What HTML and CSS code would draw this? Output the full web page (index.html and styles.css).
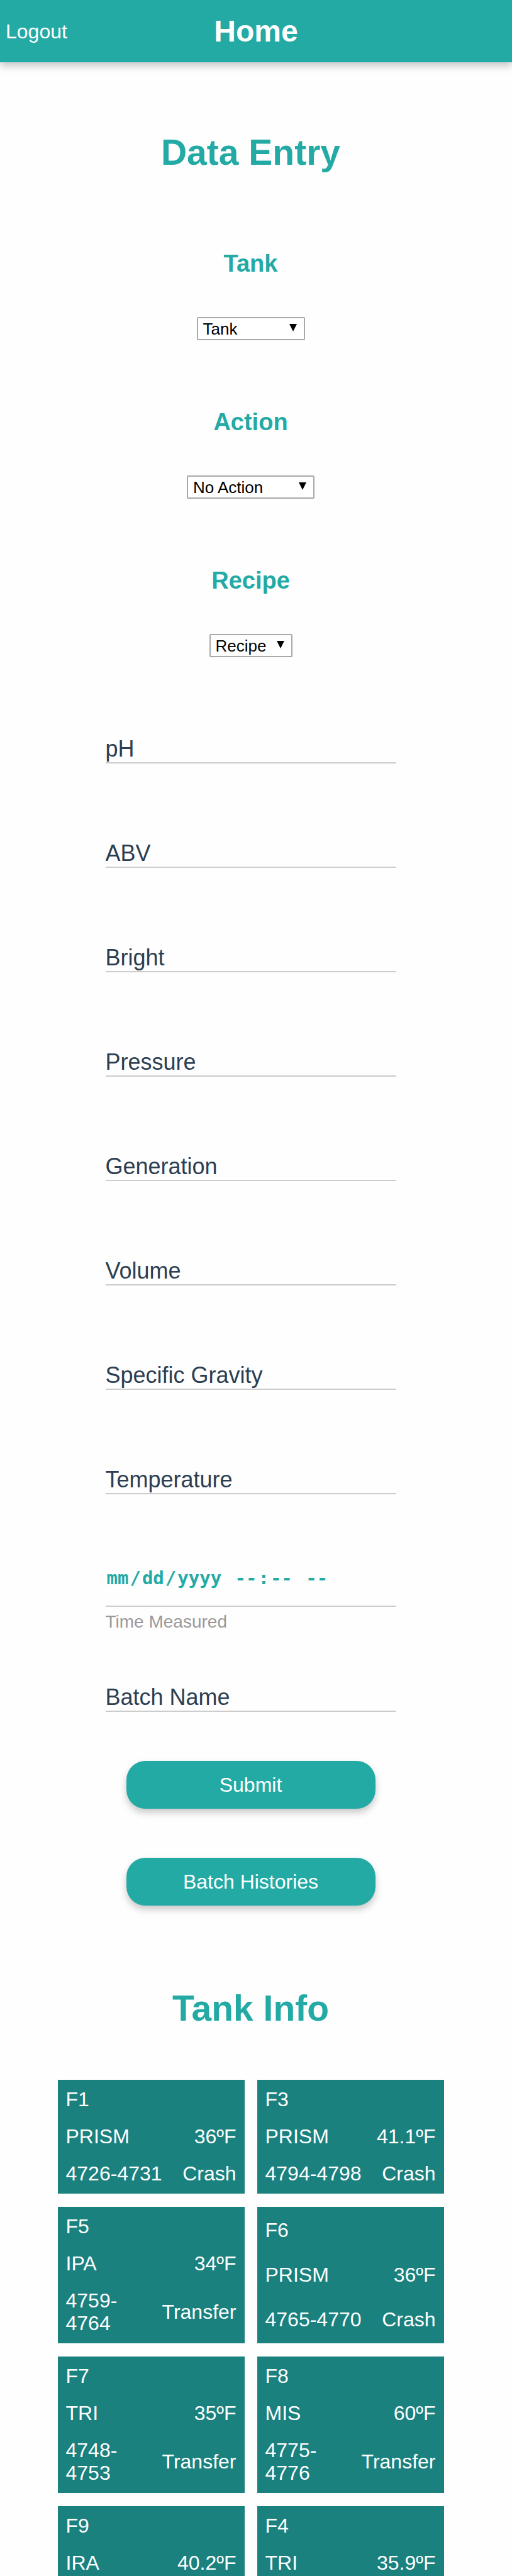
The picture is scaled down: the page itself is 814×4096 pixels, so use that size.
FILE: index.html
```html
<!DOCTYPE html>
<html lang="en">
<head>
<meta charset="utf-8">
<meta name="viewport" content="width=device-width, initial-scale=1">
<title>Home</title>
<link rel="stylesheet" href="styles.css">
</head>
<body>
<div class="app">
  <header class="topbar">
    <a class="logout" href="#logout">Logout</a>
    <h1 class="topbar-title">Home</h1>
  </header>
  <main class="page">
    <h2 class="section-title">Data Entry</h2>
    <form class="entry">
      <div class="choice">
        <label class="choice-label" for="tank">Tank</label>
        <div class="picker picker-tank">
          <select class="picker-select" id="tank"><option>Tank</option></select>
          <svg class="picker-arrow" viewBox="0 0 12 12" aria-hidden="true"><path d="M0 0H12L6 12Z"/></svg>
        </div>
      </div>
      <div class="choice">
        <label class="choice-label" for="action">Action</label>
        <div class="picker picker-action">
          <select class="picker-select" id="action"><option>No Action</option></select>
          <svg class="picker-arrow" viewBox="0 0 12 12" aria-hidden="true"><path d="M0 0H12L6 12Z"/></svg>
        </div>
      </div>
      <div class="choice">
        <label class="choice-label" for="recipe">Recipe</label>
        <div class="picker picker-recipe">
          <select class="picker-select" id="recipe"><option>Recipe</option></select>
          <svg class="picker-arrow" viewBox="0 0 12 12" aria-hidden="true"><path d="M0 0H12L6 12Z"/></svg>
        </div>
      </div>
      <div class="fields">
        <input class="field" type="text" placeholder="pH" aria-label="pH">
        <input class="field" type="text" placeholder="ABV" aria-label="ABV">
        <input class="field" type="text" placeholder="Bright" aria-label="Bright">
        <input class="field" type="text" placeholder="Pressure" aria-label="Pressure">
        <input class="field" type="text" placeholder="Generation" aria-label="Generation">
        <input class="field" type="text" placeholder="Volume" aria-label="Volume">
        <input class="field" type="text" placeholder="Specific Gravity" aria-label="Specific Gravity">
        <input class="field" type="text" placeholder="Temperature" aria-label="Temperature">
        <div class="moment">
          <input class="moment-part moment-date" type="date" id="measured" aria-labelledby="measured-label">
          <input class="moment-part" type="time" aria-labelledby="measured-label">
        </div>
        <label class="field-caption" id="measured-label" for="measured">Time Measured</label>
        <input class="field field-batch" type="text" placeholder="Batch Name" aria-label="Batch Name">
      </div>
      <div class="actions">
        <button class="button" type="submit">Submit</button>
        <button class="button" type="button">Batch Histories</button>
      </div>
    </form>
    <h2 class="section-title section-title-tanks">Tank Info</h2>
    <section class="tanks">
      <div class="tank"><table class="tank-table">
        <tr><td>F1</td><td></td></tr>
        <tr><td>PRISM</td><td>36ºF</td></tr>
        <tr><td>4726-<wbr>4731</td><td>Crash</td></tr>
      </table></div>
      <div class="tank"><table class="tank-table">
        <tr><td>F3</td><td></td></tr>
        <tr><td>PRISM</td><td>41.1ºF</td></tr>
        <tr><td>4794-<wbr>4798</td><td>Crash</td></tr>
      </table></div>
      <div class="tank"><table class="tank-table">
        <tr><td>F5</td><td></td></tr>
        <tr><td>IPA</td><td>34ºF</td></tr>
        <tr><td>4759-<wbr>4764</td><td>Transfer</td></tr>
      </table></div>
      <div class="tank"><table class="tank-table">
        <tr><td>F6</td><td></td></tr>
        <tr><td>PRISM</td><td>36ºF</td></tr>
        <tr><td>4765-<wbr>4770</td><td>Crash</td></tr>
      </table></div>
      <div class="tank"><table class="tank-table">
        <tr><td>F7</td><td></td></tr>
        <tr><td>TRI</td><td>35ºF</td></tr>
        <tr><td>4748-<wbr>4753</td><td>Transfer</td></tr>
      </table></div>
      <div class="tank"><table class="tank-table">
        <tr><td>F8</td><td></td></tr>
        <tr><td>MIS</td><td>60ºF</td></tr>
        <tr><td>4775-<wbr>4776</td><td>Transfer</td></tr>
      </table></div>
      <div class="tank"><table class="tank-table">
        <tr><td>F9</td><td></td></tr>
        <tr><td>IRA</td><td>40.2ºF</td></tr>
      </table></div>
      <div class="tank"><table class="tank-table">
        <tr><td>F4</td><td></td></tr>
        <tr><td>TRI</td><td>35.9ºF</td></tr>
      </table></div>
    </section>
  </main>
</div>
</body>
</html>
```

FILE: styles.css
```css
:root {
  --teal: #24aaa5;
  --teal-dark: #1a817f;
  --ink: #2c3e50;
  --line: #ccc;
  --shadow: 0 6px 12px rgba(0, 0, 0, 0.22);
}

* {
  box-sizing: border-box;
}

body {
  margin: 0;
  background: #fefefe;
  color: var(--ink);
  font-family: "Liberation Sans", Arial, sans-serif;
  font-size: 32px;
  line-height: 36px;
}

/* The shell fills the window and scrolls its own content. */
.app {
  height: 100vh;
  overflow: hidden auto;
  scrollbar-width: none;
}

.topbar {
  display: grid;
  grid-template-columns: 1fr auto 1fr;
  align-items: center;
  height: 99px;
  padding: 0 9px;
  background: var(--teal);
  box-shadow: var(--shadow);
  color: #fff;
}

.logout {
  color: inherit;
  text-decoration: none;
}

.topbar-title {
  margin: 0;
  font-size: 48px;
  line-height: 56px;
}

.page {
  padding-right: 17px;
}

.section-title {
  margin: 110px 0 122px;
  color: var(--teal);
  font-size: 57px;
  line-height: 66px;
  text-align: center;
}

.section-title-tanks {
  margin: 130px 0 81px;
}

.entry {
  display: flex;
  flex-direction: column;
  align-items: center;
}

.choice {
  display: flex;
  flex-direction: column;
  align-items: center;
  gap: 63px;
}

.choice + .choice {
  margin-top: 108px;
}

.choice-label {
  color: var(--teal);
  font-size: 38px;
  font-weight: bold;
  line-height: 44px;
}

.picker {
  position: relative;
  display: flex;
}

.picker-tank {
  width: 172px;
}

.picker-action {
  width: 203px;
}

.picker-recipe {
  width: 132px;
}

.picker-select {
  appearance: none;
  width: 100%;
  height: 37px;
  margin: 0;
  padding: 0 8px;
  border: 2px solid #a9a9a9;
  border-radius: 2px;
  background: #fff;
  color: #000;
  font: 26px/30px "Liberation Sans", Arial, sans-serif;
}

.picker-arrow {
  position: absolute;
  top: 11px;
  right: 13px;
  width: 12px;
  height: 12px;
  pointer-events: none;
}

.fields {
  display: flex;
  flex-direction: column;
  width: 100%;
  max-width: 462px;
  padding-top: 3px;
}

.field {
  width: 100%;
  height: 44px;
  margin: 122px 0 0;
  padding: 0;
  border: 0;
  border-bottom: 2px solid var(--line);
  border-radius: 0;
  outline: 0;
  background: transparent;
  color: var(--ink);
  font: 36px/42px "Liberation Sans", Arial, sans-serif;
}

.field::placeholder {
  color: var(--ink);
  opacity: 1;
}

/* Date and time share one underline. */
.moment {
  display: flex;
  gap: 17px;
  margin-top: 112px;
  padding-bottom: 23px;
  border-bottom: 2px solid var(--line);
}

.moment-part {
  height: 42px;
  margin: 0;
  padding: 0;
  border: 0;
  outline: 0;
  background: transparent;
  color: var(--teal);
  font: bold 29px/42px "DejaVu Sans Mono", monospace;
}

.moment-date {
  width: 187px;
}

.moment-part::-webkit-calendar-picker-indicator {
  display: none;
}

.moment-part::-webkit-datetime-edit {
  padding: 0;
}

.moment-part::-webkit-datetime-edit-month-field,
.moment-part::-webkit-datetime-edit-day-field,
.moment-part::-webkit-datetime-edit-year-field,
.moment-part::-webkit-datetime-edit-hour-field,
.moment-part::-webkit-datetime-edit-minute-field,
.moment-part::-webkit-datetime-edit-ampm-field {
  padding: 0 2px;
}

.field-caption {
  margin-top: 8px;
  color: #999;
  font-size: 28px;
  line-height: 32px;
}

.field-batch {
  margin-top: 83px;
}

.actions {
  display: flex;
  flex-direction: column;
  gap: 78px;
  width: 100%;
  max-width: 396px;
  margin-top: 78px;
}

.button {
  height: 76px;
  border: 0;
  border-radius: 30px;
  background: var(--teal);
  box-shadow: var(--shadow);
  color: #fff;
  font: 32px/36px "Liberation Sans", Arial, sans-serif;
}

.tanks {
  display: grid;
  grid-template-columns: 1fr 1fr;
  gap: 21px 20px;
  max-width: 614px;
  margin: 0 auto;
}

.tank {
  display: flex;
  background: var(--teal-dark);
  color: #fff;
}

.tank-table {
  width: 100%;
  border-spacing: 4px;
}

.tank-table td {
  padding: 9px 9px 10px;
}

.tank-table td:last-child {
  text-align: right;
}
```
